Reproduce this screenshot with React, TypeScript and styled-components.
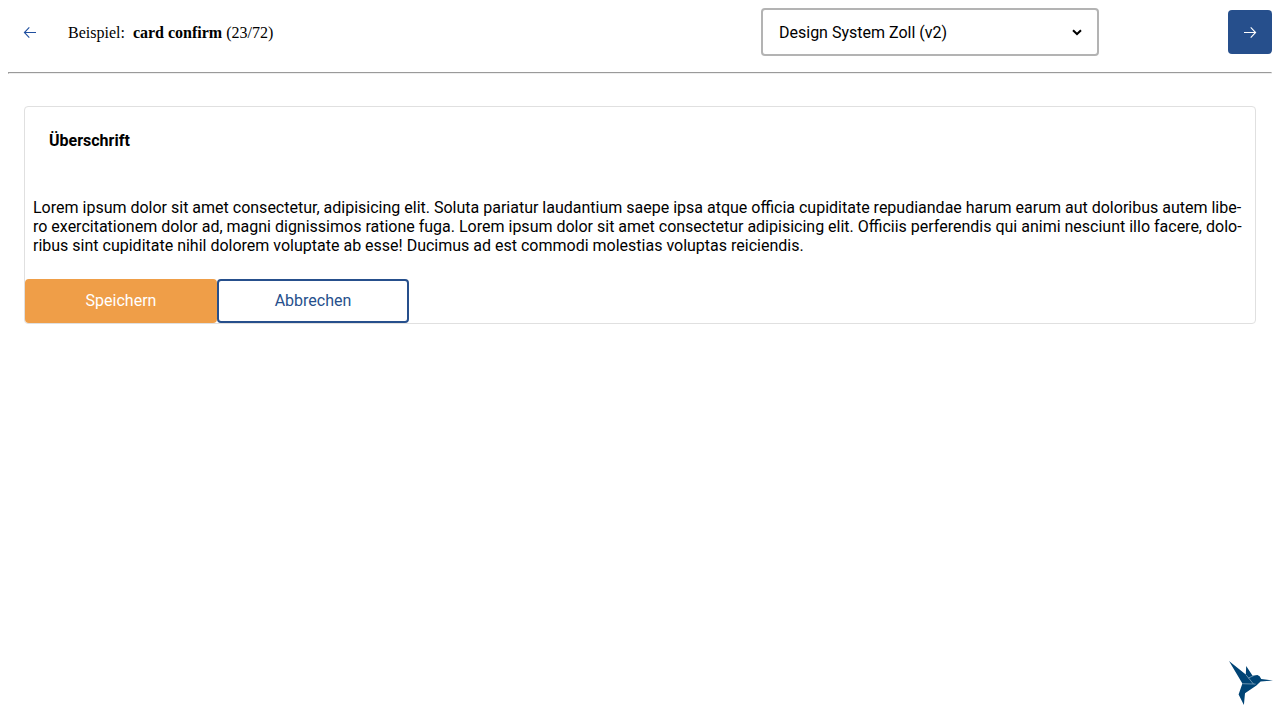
import React from 'react';
import styled, { createGlobalStyle } from 'styled-components';

const blue = '#264f8c';

const GlobalStyle = createGlobalStyle`
  *, *::before, *::after { box-sizing: border-box; }
  body {
    margin: 8px;
    background: #fff;
    color: #000;
    font-family: "Liberation Serif", "Times New Roman", serif;
    font-size: 16px;
  }
`;

const Toolbar = styled.header`
  display: flex;
  align-items: center;
  min-height: 48px;
`;

const IconButton = styled.button<{ $filled?: boolean }>`
  display: flex;
  align-items: center;
  justify-content: center;
  flex: none;
  width: 44px;
  height: 44px;
  padding: 0;
  border: 0;
  border-radius: 4px;
  background: ${(p) => (p.$filled ? blue : 'transparent')};
  color: ${(p) => (p.$filled ? '#fff' : '#1f4f9f')};
  cursor: pointer;
`;

const Title = styled.div`
  display: flex;
  flex: 1;
  gap: 4px;
  margin-left: 16px;
  line-height: 19px;
`;

const TitleLabel = styled.span`
  margin-right: 4px;
`;

const SelectField = styled.div`
  position: relative;
  flex: none;
  width: 338px;

  svg {
    position: absolute;
    top: 20px;
    right: 16px;
    pointer-events: none;
  }
`;

const ThemeSelect = styled.select`
  display: block;
  appearance: none;
  width: 100%;
  height: 48px;
  padding: 0 32px 0 16px;
  border: 2px solid #b3b3b3;
  border-radius: 4px;
  background: #fff;
  color: #000;
  font-family: Roboto, sans-serif;
  font-size: 16px;
`;

const ToolbarEnd = styled.div`
  display: flex;
  justify-content: flex-end;
  flex: none;
  width: 173px;
`;

const Divider = styled.hr`
  margin: 16px 0 0;
`;

const Main = styled.main`
  padding: 32px 16px;
  font-family: Roboto, sans-serif;
  line-height: 19px;
`;

const Card = styled.section`
  border: 1px solid #e0e0e0;
  border-radius: 4px;
`;

const CardTitle = styled.h2`
  margin: 0;
  padding: 24px;
  font-size: 16px;
  font-weight: 700;
`;

const CardText = styled.p`
  margin: 0;
  padding: 24px 8px;
`;

const Actions = styled.div`
  display: flex;
`;

const Button = styled.button<{ $primary?: boolean }>`
  width: 192px;
  height: 44px;
  padding: 0 16px 2px;
  border: 2px solid ${(p) => (p.$primary ? '#ef9e48' : blue)};
  border-radius: 4px;
  background: ${(p) => (p.$primary ? '#ef9e48' : '#fff')};
  color: ${(p) => (p.$primary ? '#fff' : blue)};
  font-family: Roboto, sans-serif;
  font-size: 16px;
  cursor: pointer;
`;

const LogoLink = styled.a`
  position: fixed;
  right: 6px;
  bottom: 14px;
  display: block;
  width: 46px;
  height: 46px;
`;

const ArrowIcon = ({ left = false }: { left?: boolean }) => (
  <svg width="14" height="14" viewBox="0 0 14 14" fill="none" stroke="currentColor" strokeWidth="1.1" aria-hidden="true">
    <path d={left ? 'M13 7.5H1.6M6.3 2.4L1.4 7.5L6.3 12.6' : 'M1 7.5H12.4M7.7 2.4L12.6 7.5L7.7 12.6'} />
  </svg>
);

const ChevronIcon = () => (
  <svg width="12" height="8" viewBox="0 0 12 8" fill="none" stroke="#000" strokeWidth="2" aria-hidden="true">
    <path d="M2 2.2L6 6L10 2.2" />
  </svg>
);

const Hummingbird = () => (
  <svg width="46" height="46" viewBox="0 0 46 46" aria-hidden="true">
    <path
      fill="#004475"
      d="M1 1L17.8 14.6L18.2 6L24.6 15.8L29.4 15.1L31.6 16.2L33.2 18.9L45 20.4L32.6 21.5L28.4 25.4L17 33.2L15.9 45L10.6 34.4L14.4 23.4Z"
    />
    <path
      d="M14.4 23.7L27.6 24.1M18 14.8L25.4 24M20.4 18L25.8 15.6"
      fill="none"
      stroke="#a9c3d4"
      strokeWidth=".6"
    />
  </svg>
);

export default function App() {
  return (
    <>
      <GlobalStyle />
      <Toolbar>
        <IconButton type="button" aria-label="Vorheriges Beispiel">
          <ArrowIcon left />
        </IconButton>
        <Title>
          <TitleLabel>Beispiel:</TitleLabel>
          <strong>card confirm</strong>
          <span>(23/72)</span>
        </Title>
        <SelectField>
          <ThemeSelect aria-label="Theme" defaultValue="zoll-v2">
            <option value="zoll-v2">Design System Zoll (v2)</option>
          </ThemeSelect>
          <ChevronIcon />
        </SelectField>
        <ToolbarEnd>
          <IconButton type="button" $filled aria-label="Nächstes Beispiel">
            <ArrowIcon />
          </IconButton>
        </ToolbarEnd>
      </Toolbar>
      <Divider />
      <Main lang="de">
        <Card>
          <CardTitle>Überschrift</CardTitle>
          <CardText>
            Lorem ipsum dolor sit amet consectetur, adipisicing elit. Soluta pariatur laudantium saepe ipsa atque
            officia cupiditate repudiandae harum earum aut doloribus autem libe&shy;ro exercitationem dolor ad, magni
            dignissimos ratione fuga. Lorem ipsum dolor sit amet consectetur adipisicing elit. Officiis perferendis qui
            animi nesciunt illo facere, dolo&shy;ribus sint cupiditate nihil dolorem voluptate ab esse! Ducimus ad est
            commodi molestias voluptas reiciendis.
          </CardText>
          <Actions>
            <Button type="button" $primary>Speichern</Button>
            <Button type="button">Abbrechen</Button>
          </Actions>
        </Card>
      </Main>
      <LogoLink href="#" aria-label="Startseite">
        <Hummingbird />
      </LogoLink>
    </>
  );
}
